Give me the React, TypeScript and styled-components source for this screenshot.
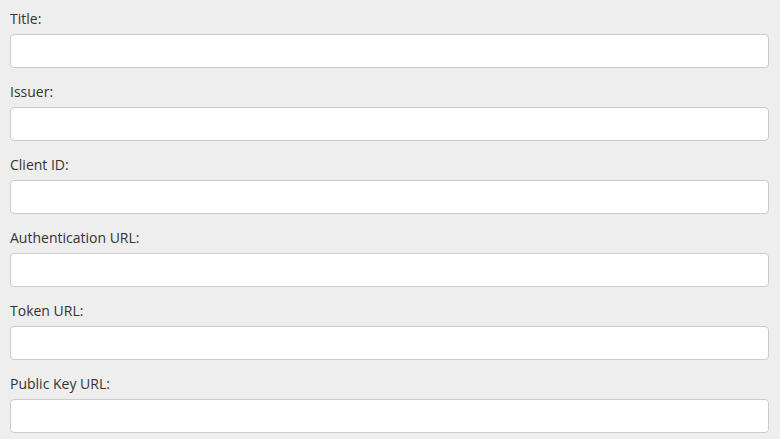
import React from 'react'
import styled, { createGlobalStyle } from 'styled-components'

const GlobalStyle = createGlobalStyle`
  html, body {
    margin: 0;
    padding: 0;
    background: #eeeeee;
  }
  body {
    font-family: "Open Sans", "Liberation Sans", sans-serif;
    color: #333;
  }
`

const Form = styled.form`
  display: flex;
  flex-direction: column;
  padding: 9px 11px 0 10px;
`

const Field = styled.div`
  display: flex;
  flex-direction: column;
  margin-bottom: 14px;
`

const Label = styled.label`
  font-size: 14px;
  line-height: 20px;
  color: #333;
  margin-bottom: 5px;
`

const Input = styled.input`
  box-sizing: border-box;
  width: 100%;
  height: 34px;
  padding: 6px 12px;
  font-family: inherit;
  font-size: 14px;
  background: #fff;
  border: 1px solid #cccccc;
  border-radius: 4px;
  outline: none;
`

const fields = [
  'Title:',
  'Issuer:',
  'Client ID:',
  'Authentication URL:',
  'Token URL:',
  'Public Key URL:',
]

export default function App() {
  return (
    <>
      <GlobalStyle />
      <Form onSubmit={e => e.preventDefault()}>
        {fields.map(f => (
          <Field key={f}>
            <Label>{f}</Label>
            <Input type="text" />
          </Field>
        ))}
      </Form>
    </>
  )
}
